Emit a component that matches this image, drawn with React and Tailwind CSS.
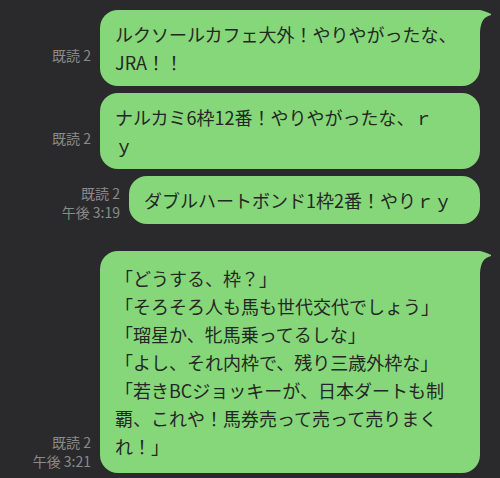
import React from "react";

const MESSAGES = [
  {
    id: 1,
    text: "ルクソールカフェ大外！やりやがったな、\nJRA！！",
    tail: true,
    width: "w-[380px]",
  },
  {
    id: 2,
    text: "ナルカミ6枠12番！やりやがったな、ｒ\nｙ",
    width: "w-[380px]",
  },
  {
    id: 3,
    text: "ダブルハートボンド1枠2番！やりｒｙ",
    time: "午後 3:19",
    width: "w-[351px]",
  },
  {
    id: 4,
    text:
      "「どうする、枠？」\n「そろそろ人も馬も世代交代でしょう」\n「瑠星か、牝馬乗ってるしな」\n「よし、それ内枠で、残り三歳外枠な」\n「若きBCジョッキーが、日本ダートも制\n覇、これや！馬券売って売って売りまく\nれ！」",
    tail: true,
    width: "w-[380px]",
    time: "午後 3:21",
    groupStart: true,
    tall: true,
  },
];

function Tail() {
  return (
    <svg
      className="absolute left-full top-0"
      width="12"
      height="24"
      viewBox="0 0 12 24"
      overflow="visible"
    >
      <path
        d="M0 0 C4 1 8 2.6 10.6 3.8 C11.4 4.2 11.2 5 10.4 5.2 C4.5 6.5 0.6 11 0 22 L0 0 Z"
        fill="#86d77a"
      />
    </svg>
  );
}

function Row({ msg }) {
  return (
    <div
      className={
        "flex items-end justify-end pr-[20px] " +
        (msg.groupStart ? "mt-[27px]" : "mt-[7px]")
      }
    >
      {/* read / time */}
      <div className="mr-[9px] flex flex-col items-end pb-[2px] text-[14px] leading-[19px] text-[#8a8a8a]">
        <span>既読 2</span>
        <span className={msg.time ? "" : "invisible"}>{msg.time || "午後 0:00"}</span>
      </div>

      <div
        className={
          "relative rounded-[18px] bg-[#86d77a] px-[15px] text-[18px] leading-[28px] text-[#232823] whitespace-pre " +
          msg.width +
          (msg.tall ? " py-[13px]" : " py-[10px]") +
          (msg.tail ? " rounded-tr-none" : "")
        }
      >
        {msg.text}
        {msg.tail && <Tail />}
      </div>
    </div>
  );
}

export default function App() {
  return (
    <div
      className="h-[478px] w-[500px] overflow-hidden bg-[#2a2a2c] pt-[3px]"
      style={{ fontFamily: '"Noto Sans CJK JP", "Noto Sans", sans-serif' }}
    >
      {MESSAGES.map((m) => (
        <Row key={m.id} msg={m} />
      ))}
    </div>
  );
}
